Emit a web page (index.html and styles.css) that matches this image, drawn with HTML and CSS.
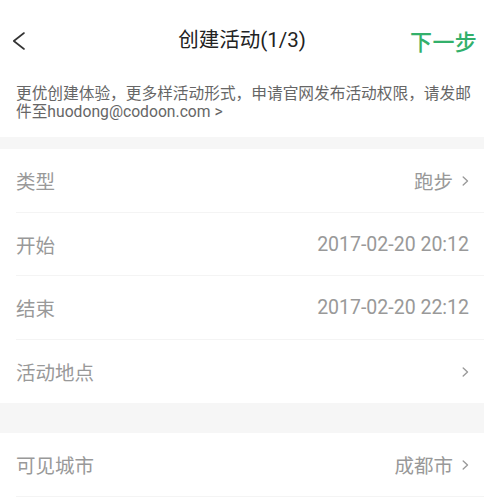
FILE: index.html
```html
<!DOCTYPE html>
<html lang="zh-CN">
<head>
<meta charset="utf-8">
<title>创建活动</title>
<link rel="stylesheet" href="styles.css">
</head>
<body>
<div class="page">
  <header class="topbar">
    <span class="back">
      <svg width="14" height="18" viewBox="0 0 14 18"><path d="M12 1 L1.8 9 L12 17" fill="none" stroke="#333" stroke-width="1.6" stroke-linecap="round" stroke-linejoin="round"/></svg>
    </span>
    <h1 class="title">创建活动(1/3)</h1>
    <span class="next">下一步</span>
  </header>
  <p class="notice">更优创建体验，更多样活动形式，申请官网发布活动权限，请发邮件至huodong@codoon.com &gt;</p>
  <div class="gap"></div>
  <section class="group">
    <div class="row"><span class="label">类型</span><span class="value">跑步<svg class="chev" width="7" height="10" viewBox="0 0 7 10"><path d="M1.2 1 L5.5 5 L1.2 9" fill="none" stroke="#9a9a9a" stroke-width="1.4" stroke-linecap="round" stroke-linejoin="round"/></svg></span></div>
    <div class="row"><span class="label">开始</span><span class="value">2017-02-20 20:12</span></div>
    <div class="row"><span class="label">结束</span><span class="value">2017-02-20 22:12</span></div>
    <div class="row last"><span class="label">活动地点</span><span class="value"><svg class="chev" width="7" height="10" viewBox="0 0 7 10"><path d="M1.2 1 L5.5 5 L1.2 9" fill="none" stroke="#9a9a9a" stroke-width="1.4" stroke-linecap="round" stroke-linejoin="round"/></svg></span></div>
  </section>
  <div class="gap big"></div>
  <section class="group">
    <div class="row"><span class="label">可见城市</span><span class="value">成都市<svg class="chev" width="7" height="10" viewBox="0 0 7 10"><path d="M1.2 1 L5.5 5 L1.2 9" fill="none" stroke="#9a9a9a" stroke-width="1.4" stroke-linecap="round" stroke-linejoin="round"/></svg></span></div>
  </section>
</div>
</body>
</html>
```
FILE: styles.css
```css
html, body {
  margin: 0;
  padding: 0;
  background: #fff;
}
body {
  font-family: Roboto, "Noto Sans CJK SC", sans-serif;
  width: 484px;
  height: 499px;
  overflow: hidden;
}
.page {
  display: flex;
  flex-direction: column;
}
.topbar {
  height: 80px;
  display: flex;
  align-items: center;
  justify-content: space-between;
  padding: 0 7px 0 12px;
  position: relative;
}
.back {
  display: flex;
  align-items: center;
  width: 60px;
  margin-top: 2px;
}
.title {
  margin: 0;
  font-size: 20.5px;
  font-weight: 400;
  color: #222;
  position: absolute;
  left: 0;
  right: 0;
  text-align: center;
  pointer-events: none;
  top: 27px;
  line-height: 26px;
}
.next {
  font-size: 22px;
  font-weight: 500;
  color: #33b06b;
  margin-top: -1px;
  letter-spacing: 0.3px;
}
.notice {
  margin: 0;
  padding: 5px 10px 17px 16px;
  font-size: 15.7px;
  line-height: 17.5px;
  color: #666;
}
.gap {
  height: 12px;
  background: #f6f6f6;
}
.gap.big {
  height: 30px;
}
.group {
  display: flex;
  flex-direction: column;
}
.row {
  height: 63.5px;
  box-sizing: border-box;
  display: flex;
  align-items: center;
  justify-content: space-between;
  padding: 0 15px 0 16px;
  position: relative;
}
.row::after {
  content: "";
  position: absolute;
  left: 16px;
  right: 0;
  bottom: 0;
  height: 1px;
  background: #f4f4f4;
}
.row.last::after {
  display: none;
}
.label {
  font-size: 19.5px;
  color: #999;
}
.value {
  font-size: 19.5px;
  color: #999;
  display: flex;
  align-items: center;
}
.chev {
  margin-left: 9px;
  margin-top: 1px;
}
```
